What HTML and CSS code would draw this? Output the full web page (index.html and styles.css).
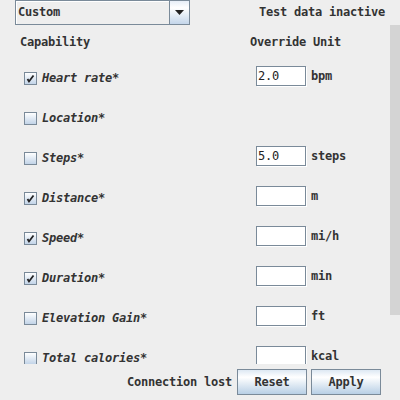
FILE: index.html
```html
<!DOCTYPE html>
<html>
<head>
<meta charset="utf-8">
<link rel="stylesheet" href="styles.css">
</head>
<body>
<div class="app">
  <div class="topbar">
    <div class="combo">
      <div class="combo-text">Custom</div>
      <div class="combo-btn">
        <svg width="9" height="5" viewBox="0 0 9 5"><path d="M0 0h9L4.5 5z" fill="#222"/></svg>
      </div>
    </div>
    <div class="status">Test data inactive</div>
  </div>
  <div class="main">
    <div class="content">
      <div class="header">
        <div class="h-cap">Capability</div>
        <div class="h-ovr">Override Unit</div>
      </div>
      <div class="row">
        <div class="cap"><span class="cb checked"><svg width="11" height="11" viewBox="0 0 11 11"><path d="M2.5 6 L4 8.5 L8.5 2.5" stroke="#222" stroke-width="1.8" fill="none"/></svg></span><span class="label">Heart rate*</span></div>
        <div class="field">2.0</div><div class="unit">bpm</div>
      </div>
      <div class="row">
        <div class="cap"><span class="cb"></span><span class="label">Location*</span></div>
      </div>
      <div class="row">
        <div class="cap"><span class="cb"></span><span class="label">Steps*</span></div>
        <div class="field">5.0</div><div class="unit">steps</div>
      </div>
      <div class="row">
        <div class="cap"><span class="cb checked"><svg width="11" height="11" viewBox="0 0 11 11"><path d="M2.5 6 L4 8.5 L8.5 2.5" stroke="#222" stroke-width="1.8" fill="none"/></svg></span><span class="label">Distance*</span></div>
        <div class="field"></div><div class="unit">m</div>
      </div>
      <div class="row">
        <div class="cap"><span class="cb checked"><svg width="11" height="11" viewBox="0 0 11 11"><path d="M2.5 6 L4 8.5 L8.5 2.5" stroke="#222" stroke-width="1.8" fill="none"/></svg></span><span class="label">Speed*</span></div>
        <div class="field"></div><div class="unit">mi/h</div>
      </div>
      <div class="row">
        <div class="cap"><span class="cb checked"><svg width="11" height="11" viewBox="0 0 11 11"><path d="M2.5 6 L4 8.5 L8.5 2.5" stroke="#222" stroke-width="1.8" fill="none"/></svg></span><span class="label">Duration*</span></div>
        <div class="field"></div><div class="unit">min</div>
      </div>
      <div class="row">
        <div class="cap"><span class="cb"></span><span class="label">Elevation Gain*</span></div>
        <div class="field"></div><div class="unit">ft</div>
      </div>
      <div class="row">
        <div class="cap"><span class="cb"></span><span class="label">Total calories*</span></div>
        <div class="field"></div><div class="unit">kcal</div>
      </div>
    </div>
    <div class="scrollbar"><div class="thumb"></div></div>
  </div>
  <div class="bottom">
    <div class="conn">Connection lost</div>
    <div class="btn">Reset</div>
    <div class="btn">Apply</div>
  </div>
</div>
</body>
</html>
```
FILE: styles.css
```css
html, body {
  margin: 0;
  padding: 0;
  background: #eeeeee;
}
body {
  font-family: "DejaVu Sans Mono", monospace;
  font-weight: bold;
  font-size: 12px;
  letter-spacing: -0.22px;
  line-height: 14px;
  color: #333333;
}
.app {
  width: 400px;
  height: 400px;
  overflow: hidden;
  display: flex;
  flex-direction: column;
}
.topbar {
  height: 25px;
  display: flex;
  padding-left: 15px;
  flex: none;
}
.combo {
  width: 175px;
  height: 25px;
  box-sizing: border-box;
  border: 1px solid #7a8a99;
  display: flex;
}
.combo-text {
  flex: 1;
  padding: 4px 0 0 2px;
  background: #eeeeee;
  box-shadow: inset 1px 1px 0 #ffffff;
}
.combo-btn {
  width: 19px;
  border-left: 1px solid #7a8a99;
  background: linear-gradient(#e6eef7, #ffffff 30%, #c4d6ea);
  display: flex;
  align-items: center;
  justify-content: center;
}
.status {
  margin-left: auto;
  margin-right: 15px;
  padding-top: 5px;
}
.main {
  height: 339px;
  display: flex;
  flex: none;
}
.content {
  flex: 1;
  overflow: hidden;
  padding-left: 20px;
}
.scrollbar {
  width: 10px;
  flex: none;
}
.thumb {
  height: 290px;
  background: #d4d4d4;
}
.header {
  height: 41px;
  box-sizing: border-box;
  padding-top: 10px;
  display: flex;
}
.h-cap {
  width: 230px;
}
.row {
  height: 40px;
  display: flex;
  align-items: flex-start;
}
.cap {
  width: 232px;
  padding-left: 4px;
  display: flex;
  align-items: flex-start;
}
.cb {
  width: 13px;
  height: 13px;
  box-sizing: border-box;
  border: 1px solid #7a8a99;
  background: linear-gradient(#ffffff, #c2d4e8);
  margin-top: 6px;
  display: flex;
  align-items: center;
  justify-content: center;
}
.label {
  font-style: italic;
  margin-left: 5px;
  padding-top: 5px;
}
.field {
  width: 50px;
  height: 20px;
  box-sizing: border-box;
  border: 1px solid #7a8a99;
  background: #ffffff;
  box-shadow: 1px 1px 0 #ffffff;
  padding: 2px 0 0 1px;
  font-weight: normal;
  color: #222;
}
.unit {
  margin-left: 5px;
  padding-top: 3px;
}
.bottom {
  height: 36px;
  flex: none;
  display: flex;
  justify-content: flex-end;
  align-items: flex-start;
  padding-right: 19px;
  gap: 4px;
}
.conn {
  padding-top: 11px;
  margin-right: 1px;
}
.btn {
  margin-top: 5px;
  width: 70px;
  height: 26px;
  box-sizing: border-box;
  border: 1px solid #7a8a99;
  background: linear-gradient(#dde8f3, #ffffff 30%, #b8cfe5);
  display: flex;
  align-items: center;
  justify-content: center;
}
```
